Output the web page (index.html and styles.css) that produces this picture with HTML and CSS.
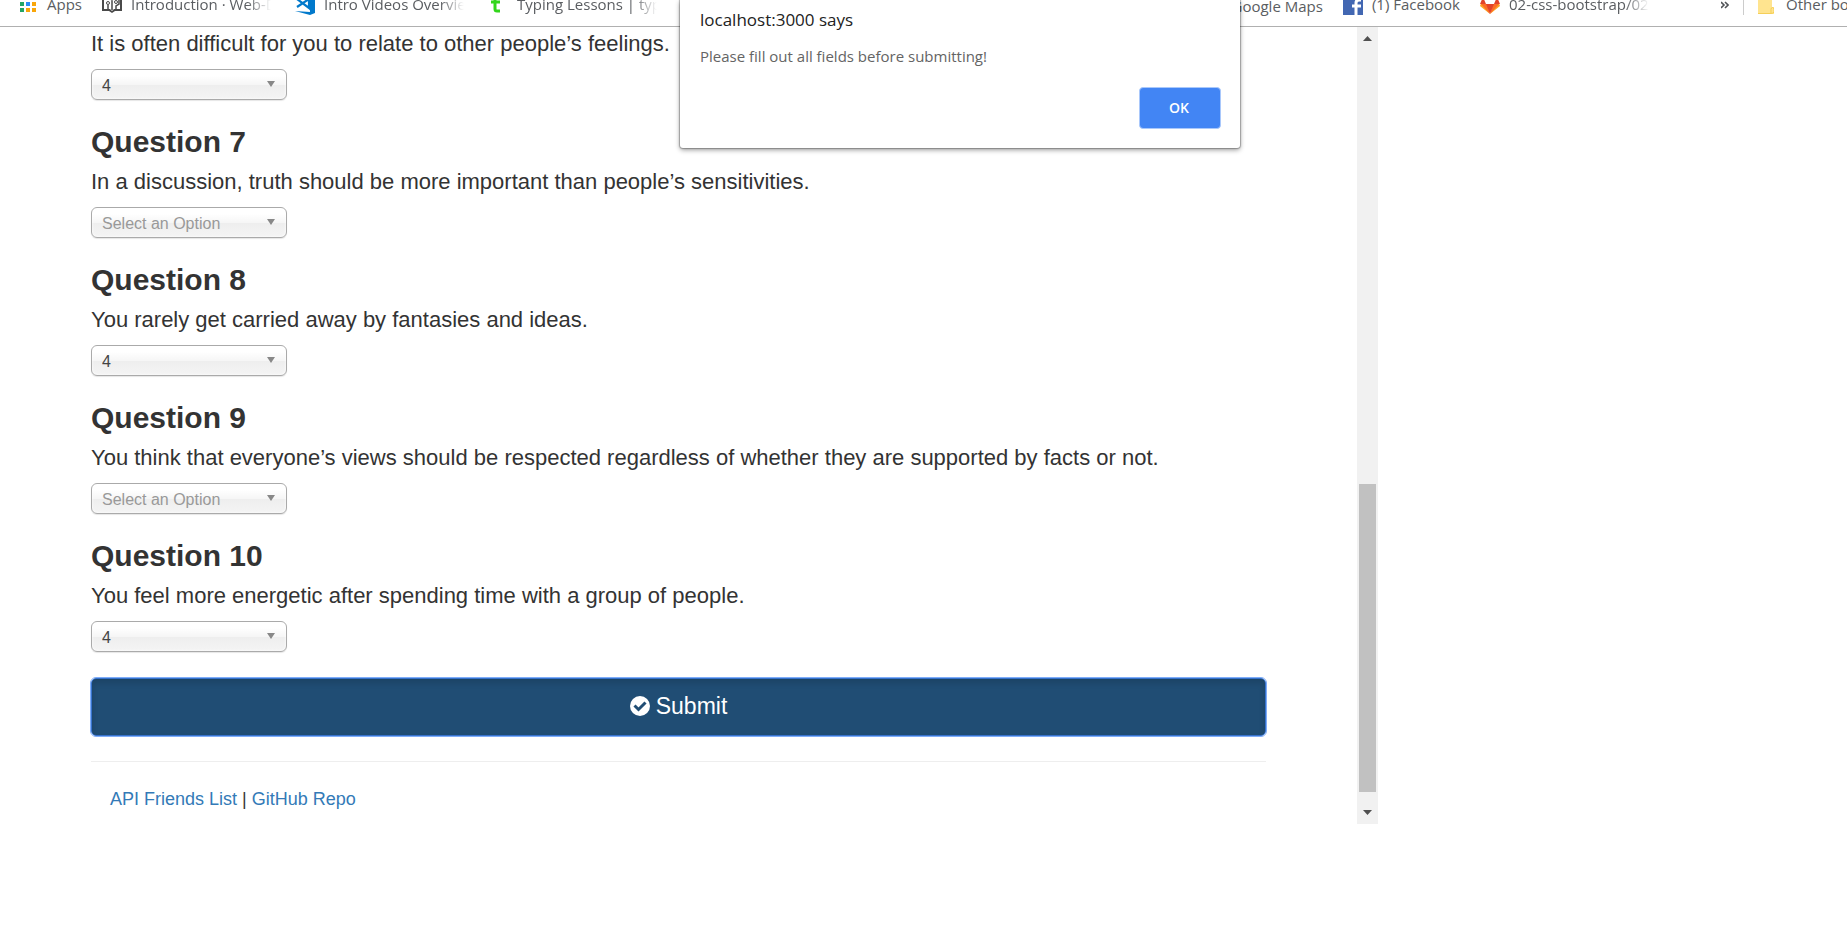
FILE: index.html
```html
<!DOCTYPE html>
<html lang="en">
<head>
<meta charset="utf-8">
<title>Friend Finder Survey</title>
<link rel="stylesheet" href="styles.css">
</head>
<body>
<nav class="bookmarks" aria-label="Bookmarks">
  <a class="bookmark bookmark-apps" href="#">
    <svg class="icon" viewBox="0 0 20 20" aria-hidden="true">
      <path fill="#23a566" d="M2 0h4v3H2zM2 7h4v4H2zM2 13h4v4H2z"/>
      <path fill="#2a8cf7" d="M8 7h4v4H8z"/>
      <path fill="#f9a60a" d="M8 0h4v3H8zM14 0h4v3h-4zM14 7h4v4h-4zM8 13h4v4H8zM14 13h4v4h-4z"/>
    </svg>
    <span>Apps</span>
  </a>
  <a class="bookmark" href="#">
    <svg class="icon" viewBox="0 0 20 20" aria-hidden="true">
      <path fill="#4a4a4a" d="M0 2h2v12h6l2 2 2-2h6V2h2v14h-7l-3 2-3-2H0z"/>
      <path fill="none" stroke="#4a4a4a" stroke-width="1.5" d="M3 3h4l3 2 3-2h4M10 4v11M6 14v-4M14 14v-3l3-2V5"/>
      <circle cx="6" cy="8" r="1.500" fill="none" stroke="#4a4a4a"/>
      <circle cx="14" cy="7" r="1.500" fill="none" stroke="#4a4a4a"/>
    </svg>
    <span class="label-fade">Introduction · Web-D</span>
  </a>
  <a class="bookmark" href="#">
    <svg class="icon" viewBox="0 0 20 20" aria-hidden="true">
      <path fill="#0179cb" d="M14 0l6 2v16l-5 2-15-4 15 1z"/>
      <path fill="none" stroke="#0179cb" stroke-width="2.2" d="M2 4l12 9V4L2 12"/>
    </svg>
    <span class="label-fade">Intro Videos Overview</span>
  </a>
  <a class="bookmark" href="#">
    <svg class="icon" viewBox="0 0 20 20" aria-hidden="true">
      <path fill="none" stroke="#33d61c" stroke-width="3" d="M7 0v14q0 2 2 2h3M3 7h9"/>
    </svg>
    <span class="label-fade">Typing Lessons | typin</span>
  </a>
  <a class="bookmark bookmark-right" href="#"><span>Google Maps</span></a>
  <a class="bookmark bookmark-facebook" href="#">
    <svg class="icon" viewBox="0 0 20 20" aria-hidden="true">
      <path fill="#4267b2" d="M0 0h20v20H0z"/>
      <path fill="none" stroke="#fff" stroke-width="3" d="M13 20V8q0-3 3-3h2M9 11h9"/>
    </svg>
    <span>(1) Facebook</span>
  </a>
  <a class="bookmark" href="#">
    <svg class="icon" viewBox="0 0 20 20" aria-hidden="true">
      <path fill="#fca326" d="M0 11L2 6l8 13zM20 11l-2-5-8 13z"/>
      <path fill="#fc6d26" d="M1 9h6l3 10zM19 9h-6l-3 10z"/>
      <path fill="#e24329" d="M3 2l3 7h8l3-7 3 7h-6l-4 10L6 9H0z"/>
    </svg>
    <span class="label-fade">02-css-bootstrap/02-</span>
  </a>
  <button class="more" type="button" aria-label="More bookmarks">
    <svg class="icon-more" viewBox="0 0 8 20" aria-hidden="true">
      <path fill="none" stroke="#505357" stroke-width="1.6" d="M0 7l3 3-3 3M4 7l3 3-3 3"/>
    </svg>
  </button>
  <a class="bookmark bookmark-other" href="#">
    <svg class="icon-folder" viewBox="0 0 16 20" aria-hidden="true">
      <path fill="#ffe48f" d="M0 0h14v12h2v7H1l-1-1z"/>
      <path fill="none" stroke="#f5cf58" d="M0 18.500h13v-4q0-2 1.500-2t1.500 2v2q0 2-3 2"/>
    </svg>
    <span>Other bookmarks</span>
  </a>
</nav>

<div class="viewport">
  <main class="survey">
    <form class="form">
      <section class="question">
        <label class="prompt" for="q6">It is often difficult for you to relate to other people’s feelings.</label>
        <div class="picker"><select id="q6"><option>4</option></select><svg class="caret" viewBox="0 0 8 6" aria-hidden="true"><path d="M0 0h8L4 6z"/></svg></div>
      </section>
      <section class="question">
        <h3>Question 7</h3>
        <label class="prompt" for="q7">In a discussion, truth should be more important than people’s sensitivities.</label>
        <div class="picker"><select id="q7" class="unset"><option>Select an Option</option></select><svg class="caret" viewBox="0 0 8 6" aria-hidden="true"><path d="M0 0h8L4 6z"/></svg></div>
      </section>
      <section class="question">
        <h3>Question 8</h3>
        <label class="prompt" for="q8">You rarely get carried away by fantasies and ideas.</label>
        <div class="picker"><select id="q8"><option>4</option></select><svg class="caret" viewBox="0 0 8 6" aria-hidden="true"><path d="M0 0h8L4 6z"/></svg></div>
      </section>
      <section class="question">
        <h3>Question 9</h3>
        <label class="prompt" for="q9">You think that everyone’s views should be respected regardless of whether they are supported by facts or not.</label>
        <div class="picker"><select id="q9" class="unset"><option>Select an Option</option></select><svg class="caret" viewBox="0 0 8 6" aria-hidden="true"><path d="M0 0h8L4 6z"/></svg></div>
      </section>
      <section class="question">
        <h3>Question 10</h3>
        <label class="prompt" for="q10">You feel more energetic after spending time with a group of people.</label>
        <div class="picker"><select id="q10"><option>4</option></select><svg class="caret" viewBox="0 0 8 6" aria-hidden="true"><path d="M0 0h8L4 6z"/></svg></div>
      </section>
      <button class="submit" type="button">
        <svg class="check" viewBox="0 0 20 20" aria-hidden="true">
          <circle cx="10" cy="10" r="10" fill="#fff"/>
          <path fill="none" stroke="#204d74" stroke-width="3" d="M4.500 9.500l4 4 7-7"/>
        </svg>
        <span>Submit</span>
      </button>
    </form>
    <footer class="footer">
      <a href="#">API Friends List</a> | <a href="#">GitHub Repo</a>
    </footer>
  </main>
  <div class="scrollbar" aria-hidden="true">
    <svg class="scroll-arrow" viewBox="0 0 9 5"><path d="M0 5h9L4.500 0z"/></svg>
    <div class="track"><div class="thumb"></div></div>
    <svg class="scroll-arrow" viewBox="0 0 9 5"><path d="M0 0h9L4.500 5z"/></svg>
  </div>
</div>

<div class="alert" role="alertdialog" aria-labelledby="alert-title" aria-describedby="alert-text">
  <h2 id="alert-title">localhost:3000 says</h2>
  <p id="alert-text">Please fill out all fields before submitting!</p>
  <button class="ok" type="button">OK</button>
</div>
</body>
</html>
```

FILE: styles.css
```css
* {
  box-sizing: border-box;
}

body {
  margin: 0;
  min-height: 100vh;
  overflow: hidden;
  background: #fff;
  color: #333;
  font-family: "Liberation Sans", Arial, sans-serif;
}

/* Bookmarks bar, scrolled partly above the top edge */
.bookmarks {
  display: flex;
  align-items: flex-end;
  height: 27px;
  padding: 0 0 11px 18px;
  overflow: hidden;
  border-bottom: 1px solid #b0b0b0;
  font: 15px/18px "Open Sans", "Noto Sans", sans-serif;
}

.bookmark {
  display: flex;
  flex: none;
  gap: 9px;
  margin-right: 24px;
  color: #5a5d61;
  text-decoration: none;
  white-space: nowrap;
}

.bookmark-apps {
  margin-right: 20px;
}

.bookmark-right {
  margin-left: auto;
  margin-right: 20px;
}

.bookmark-facebook {
  margin-right: 20px;
}

.icon {
  width: 20px;
  height: 20px;
}

.label-fade {
  width: 140px;
  overflow: hidden;
  mask-image: linear-gradient(to right, #000 116px, transparent);
}

.more {
  display: flex;
  margin: 0 14px 0 48px;
  padding: 0;
  border: 0;
  background: none;
}

.icon-more {
  width: 8px;
  height: 20px;
}

.bookmark-other {
  gap: 12px;
  margin: 0;
  padding-left: 14px;
  border-left: 1px solid #ccc;
}

.bookmark-other span {
  width: 61px;
  overflow: hidden;
}

.icon-folder {
  width: 16px;
  height: 20px;
}

/* Survey page */
.viewport {
  display: flex;
  width: 1378px;
  max-width: 100%;
}

.survey {
  flex: 1;
  padding: 1px 91px 12px;
}

.question {
  display: flex;
  flex-direction: column;
  align-items: flex-start;
  margin-bottom: 25px;
}

.question h3 {
  margin: 0 0 8px;
  font-size: 30px;
  line-height: 33px;
}

.prompt {
  margin-bottom: 9px;
  font-size: 22px;
  line-height: 32px;
}

.picker {
  position: relative;
  width: 196px;
}

.picker select {
  display: block;
  width: 100%;
  height: 31px;
  padding: 1px 10px 0;
  appearance: none;
  border: 1px solid #aaa;
  border-radius: 6px;
  background: linear-gradient(#fff 20%, #f6f6f6 50%, #eee 52%, #f4f4f4);
  box-shadow: inset 0 0 3px #fff, 0 1px 1px rgba(0, 0, 0, 0.1);
  color: #444;
  font: 16px "Liberation Sans", Arial, sans-serif;
}

.picker .unset {
  color: #999;
}

.caret {
  position: absolute;
  top: 12px;
  right: 12px;
  width: 8px;
  height: 6px;
  fill: #888;
  pointer-events: none;
}

.submit {
  display: flex;
  align-items: center;
  justify-content: center;
  gap: 6px;
  width: 100%;
  height: 58px;
  margin-top: 26px;
  padding: 0 0 2px;
  border: 1px solid #3672cc;
  border-radius: 5px;
  outline: 1px solid #7fadf8;
  background: #204d74;
  box-shadow: inset 0 4px 6px rgba(0, 0, 0, 0.13);
  color: #fff;
  font: 23px "Liberation Sans", Arial, sans-serif;
}

.check {
  width: 20px;
  height: 20px;
}

.footer {
  margin-top: 25px;
  padding: 24px 19px 0;
  border-top: 1px solid #eee;
  font-size: 18px;
  line-height: 26px;
}

.footer a {
  color: #337ab7;
  text-decoration: none;
}

.scrollbar {
  display: flex;
  flex-direction: column;
  align-items: center;
  gap: 18px;
  width: 21px;
  padding: 9px 2px;
  background: #f1f1f1;
}

.scroll-arrow {
  flex: none;
  width: 9px;
  height: 5px;
  fill: #505050;
}

.track {
  display: flex;
  flex: 1;
  flex-direction: column;
  justify-content: flex-end;
  width: 100%;
}

.thumb {
  height: 42%;
  background: #c1c1c1;
}

/* Alert hanging from the top edge */
.alert {
  position: absolute;
  top: 0;
  left: 680px;
  display: flex;
  flex-direction: column;
  width: 560px;
  padding: 8px 19px 19px 20px;
  border-radius: 0 0 3px 3px;
  background: #fff;
  box-shadow: 0 0 1px 1px rgba(0, 0, 0, 0.25), 0 2px 5px rgba(0, 0, 0, 0.4);
  font-family: "Open Sans", "Noto Sans", sans-serif;
}

.alert h2 {
  margin: 0 0 14px;
  color: #222;
  font-size: 17px;
  font-weight: 400;
  line-height: 24px;
}

.alert p {
  margin: 0 0 21px;
  color: #646464;
  font-size: 15px;
  line-height: 20px;
}

.ok {
  align-self: flex-end;
  width: 82px;
  height: 42px;
  padding: 0 2px 2px 0;
  border: 1px solid #a9c8fb;
  border-radius: 4px;
  background: #4285f4;
  color: #fff;
  font: 600 14px "Open Sans", "Noto Sans", sans-serif;
}
```
